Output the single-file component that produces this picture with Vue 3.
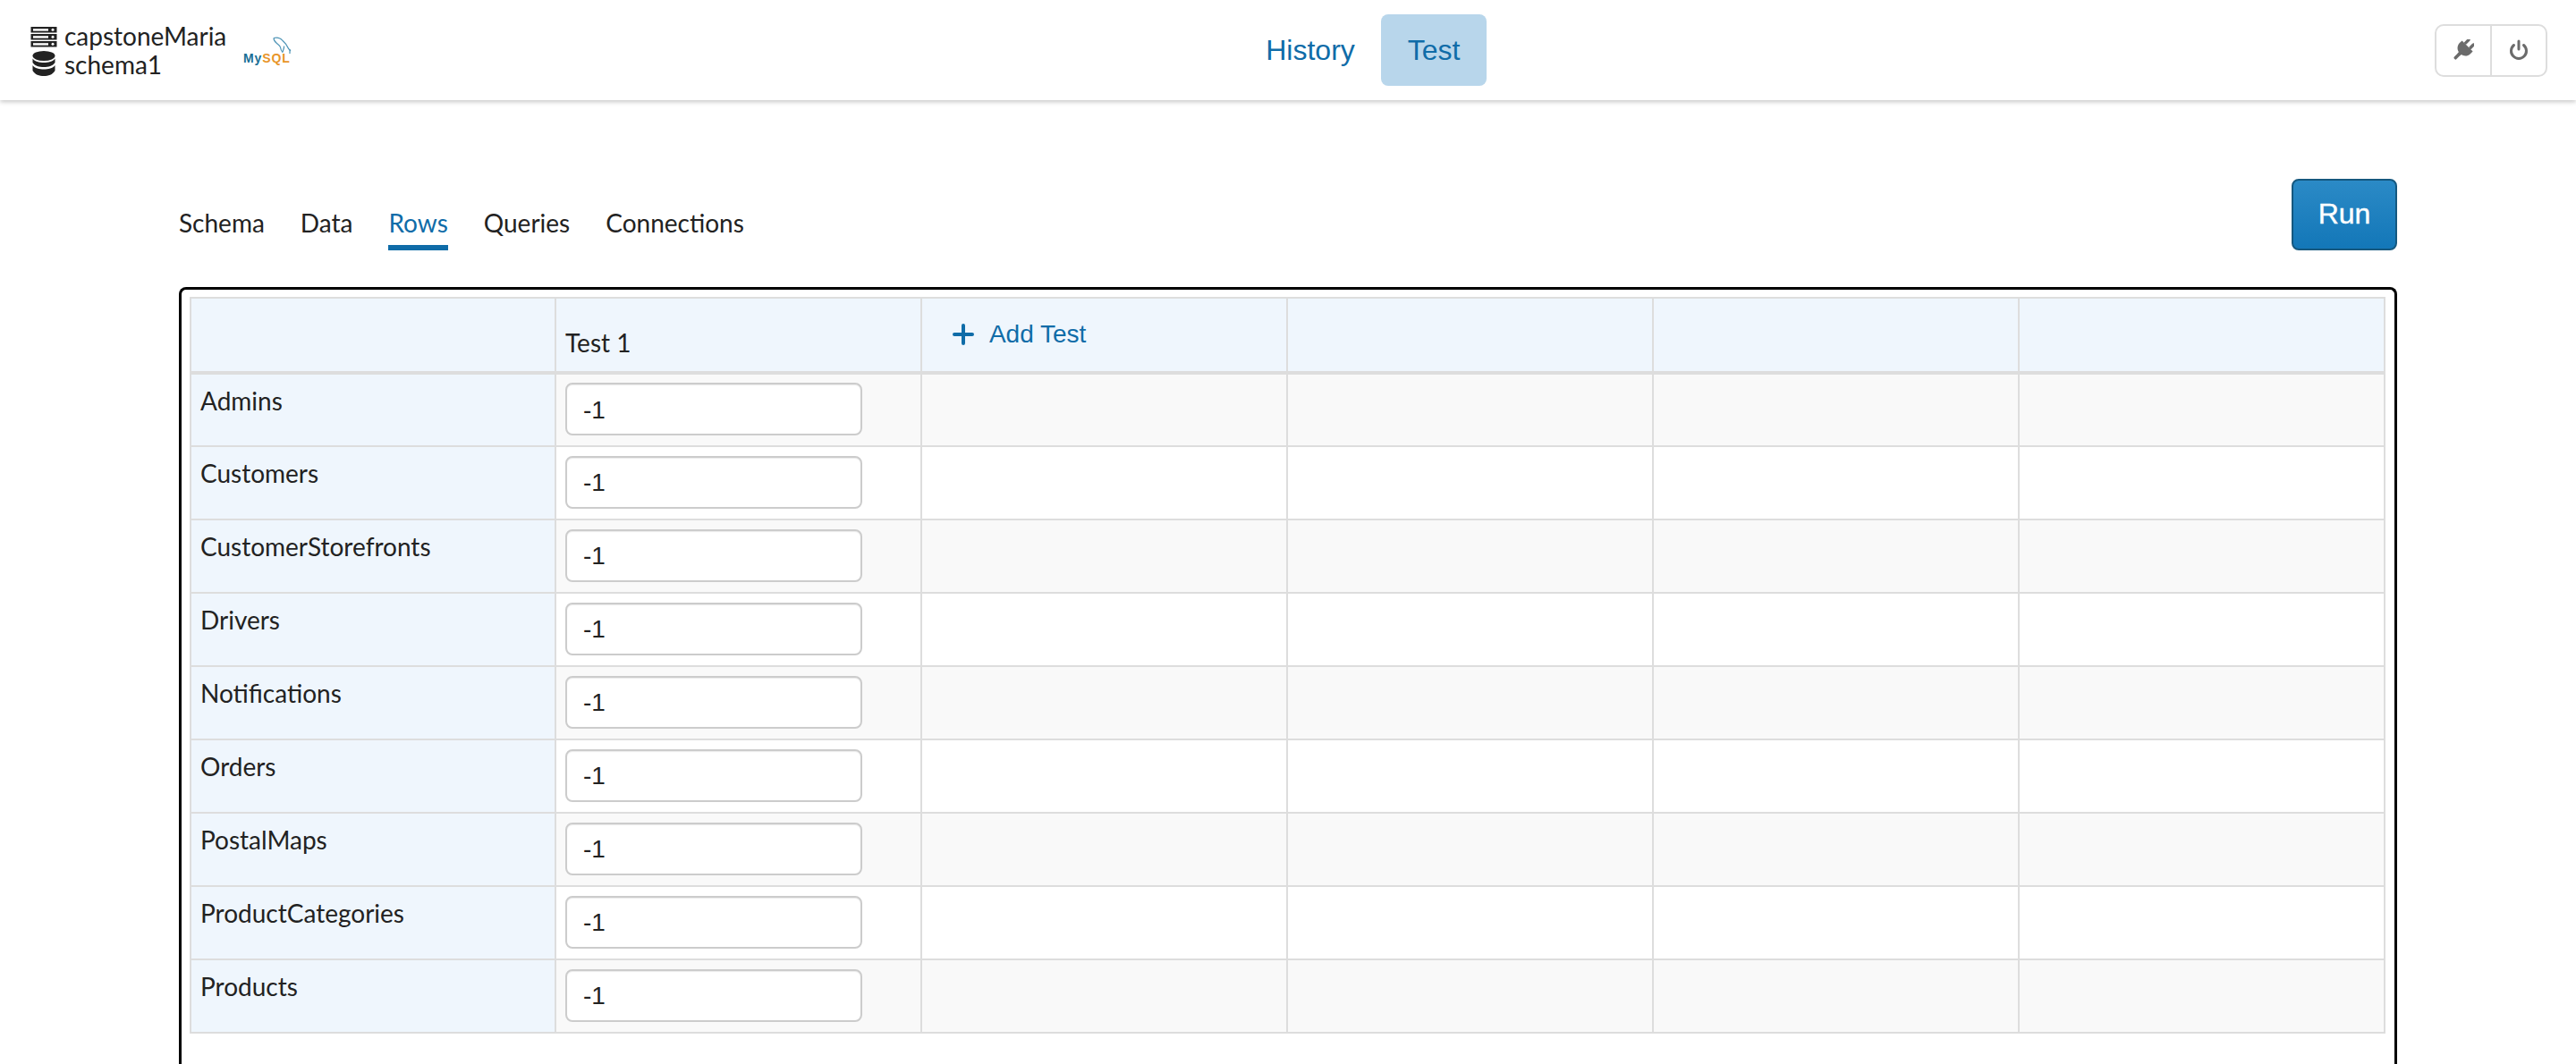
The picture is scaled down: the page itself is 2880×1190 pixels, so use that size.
<script setup>
const rows = ['Admins','Customers','CustomerStorefronts','Drivers','Notifications','Orders','PostalMaps','ProductCategories','Products']
const tabs = ['Schema','Data','Rows','Queries','Connections']
</script>

<template>
  <div class="page">
    <header class="topbar">
      <div class="brand">
        <div class="brand-icons">
          <svg width="30" height="23" viewBox="0 0 30 23">
            <g v-for="y in [0,8,16]" :key="y">
              <rect x="0.500" :y="y" width="29" height="6.500" fill="#222"/>
              <rect x="3" :y="y+2.200" width="17" height="2.400" fill="#fff"/>
              <circle cx="25" :cy="y+3.300" r="1.500" fill="#fff"/>
            </g>
          </svg>
          <svg width="26" height="28" viewBox="0 0 26 28">
            <ellipse cx="13" cy="5.500" rx="12.500" ry="5.500" fill="#222"/>
            <path d="M.5 8.500C3 12 8 13 13 13s10-1 12.500-4.500V13C23 17 18 18 13 18S3 17 .5 13Z" fill="#222"/>
            <path d="M.5 16C3 19.500 8 20.500 13 20.500S23 19.500 25.500 16V22C23 26.500 18 28 13 28S3 26.500 .5 22Z" fill="#222"/>
          </svg>
        </div>
        <div class="brand-text">
          <div>capstoneMaria</div>
          <div>schema1</div>
        </div>
        <div class="mysql">
          <svg class="dolphin" width="22" height="24" viewBox="0 0 22 24" fill="none" stroke="#4f94b6" stroke-width="1.200">
            <path d="M1 1.500C5 .5 9 2 11 4.500c2.500 2.500 4.500 4 5.500 7 .5 1.500 1.500 3 3.500 4.500"/>
            <path d="M1 1.500c0 3 1.500 4.500 3.500 6 1.500 1.500 3.500 2 4 4.500 .3 2 1 4 2.500 5.500"/>
            <path d="M11 17.500c.5-3 2-4.500 1.500-7M19 14v5"/>
          </svg>
          <div class="mysql-word"><span class="my">My</span><span class="sql">SQL</span></div>
        </div>
      </div>
      <nav class="main-nav">
        <a class="nav-item">History</a>
        <a class="nav-item active">Test</a>
      </nav>
      <div class="tools">
        <button class="tool">
          <svg width="24" height="24" viewBox="0 0 24 24" fill="#6b6b6b">
            <g transform="rotate(45 12 12)">
              <rect x="6.500" y="-2" width="3.400" height="8" rx="1.700"/>
              <rect x="14.100" y="-2" width="3.400" height="8" rx="1.700"/>
              <path d="M3.500 5.500h17v3.500c0 5-3.500 7.500-6.500 8.200V19h-4v-1.800C7 16.500 3.500 14 3.500 9Z"/>
              <rect x="10.200" y="17" width="3.600" height="9" rx="1.500"/>
            </g>
          </svg>
        </button>
        <button class="tool">
          <svg width="22" height="24" viewBox="0 0 22 24" fill="none" stroke="#6b6b6b" stroke-width="3" stroke-linecap="round">
            <path d="M11 2v9"/>
            <path d="M5.500 6.500a8.500 8.500 0 1 0 11 0"/>
          </svg>
        </button>
      </div>
    </header>

    <main class="content">
      <div class="toolbar">
        <div class="tabs">
          <a v-for="t in tabs" :key="t" class="tab" :class="{ current: t === 'Rows' }">{{ t }}</a>
        </div>
        <button class="run">Run</button>
      </div>
      <section class="card">
        <table class="grid">
          <thead>
            <tr>
              <th class="col-first"></th>
              <th class="bottom col-mid">Test 1</th>
              <th class="add col-mid">
                <span class="add-test">
                  <svg width="24" height="24" viewBox="0 0 24 24" stroke="#0f6ca8" stroke-width="4" stroke-linecap="round"><path d="M12 2v20M2 12h20"/></svg>
                  Add Test
                </span>
              </th>
              <th class="col-mid"></th><th class="col-mid"></th><th></th>
            </tr>
          </thead>
          <tbody>
            <tr v-for="r in rows" :key="r">
              <th class="name">{{ r }}</th>
              <td><input class="value" value="-1" /></td>
              <td></td><td></td><td></td><td></td>
            </tr>
          </tbody>
        </table>
      </section>
    </main>
  </div>
</template>

<style scoped>
.page { width: 2880px; height: 1190px; overflow: hidden; background: #fff; font-family: Lato, sans-serif; color: #222; }
.topbar { height: 112px; box-sizing: border-box; position: relative; display: flex; justify-content: space-between; align-items: center; padding: 0 32px 0 34px; box-shadow: 0 2px 5px rgba(0,0,0,.22); }
.brand { display: flex; align-items: center; }
.brand-icons { display: flex; flex-direction: column; align-items: center; gap: 4px; margin-right: 8px; margin-top: 2px; }
.brand-text { font-size: 28px; line-height: 32px; width: 200px; }
.mysql { position: relative; width: 56px; height: 30px; margin-top: 2px; }
.dolphin { position: absolute; left: 33px; top: -1px; }
.mysql-word { position: absolute; left: 0; bottom: 0; font: bold 14px/13px "Liberation Sans", sans-serif; letter-spacing: .9px; }
.my { color: #1a6f95; }
.sql { color: #e8952a; }
.main-nav { position: absolute; left: 1386px; top: 16px; display: flex; }
.nav-item { width: 158px; height: 80px; display: flex; align-items: center; justify-content: center; font: 32px "Liberation Sans", sans-serif; color: #0f6ca8; border-radius: 8px; }
.nav-item.active { width: 118px; background: #b8d6eb; }
.tools { display: flex; border: 2px solid #ddd; border-radius: 10px; width: 126px; height: 59px; box-sizing: border-box; }
.tool { flex: 1; border: 0; background: none; padding: 0; display: flex; align-items: center; justify-content: center; }
.tool + .tool { border-left: 2px solid #ddd; }
.content { padding: 88px 200px 0; }
.toolbar { display: flex; justify-content: space-between; height: 80px; margin-bottom: 41px; }
.tabs { display: flex; gap: 40px; padding-top: 32px; }
.tab { font-size: 28px; line-height: 34px; height: 48px; box-sizing: border-box; border-bottom: 6px solid transparent; }
.tab.current { color: #0f6ca8; border-bottom-color: #0f6ca8; }
.run { width: 118px; height: 80px; border: 2px solid #15587f; border-radius: 8px; color: #fff; font: 32px "Liberation Sans", sans-serif; -webkit-text-stroke: .4px #fff; background: linear-gradient(#2b8ac6, #1377b8); padding: 0 0 2px; }
.card { border: 3px solid #000; border-bottom: 0; border-radius: 8px 8px 0 0; height: 900px; padding: 8px 10px 0 9px; }
.grid { border-collapse: collapse; table-layout: fixed; width: 2455px; }
.grid th, .grid td { box-sizing: border-box; border: 2px solid #ddd; padding: 0; font-weight: 400; text-align: left; }
.col-first { width: 408px; }
.col-mid { width: 408.9px; }
thead tr { height: 84px; }
thead th { background: #eff6fd; border-bottom-width: 4px !important; vertical-align: bottom; }
thead th.bottom { padding: 0 10px 15px; }
thead th.add { vertical-align: top; }
.add-test { display: flex; align-items: center; gap: 17px; color: #0f6ca8; padding: 23px 0 0 34px; font-family: "Liberation Sans", sans-serif; }
.grid th { font-size: 28px; line-height: 34px; }
tbody tr { height: 82px; }
tbody tr:nth-child(odd) td { background: #f9f9f9; }
.grid .name { background: #eff6fd; vertical-align: top; padding: 12px 10px 0; }
.grid td { vertical-align: middle; padding: 0 10px 2px; }
.value { display: block; width: 332px; height: 59px; box-sizing: border-box; border: 2px solid #ccc; border-radius: 8px; padding: 2px 18px 0; font: 28px "Liberation Sans", sans-serif; color: #222; background: #fff; outline: 0; box-shadow: inset 0 1px 1px rgba(0,0,0,.08); }
</style>
